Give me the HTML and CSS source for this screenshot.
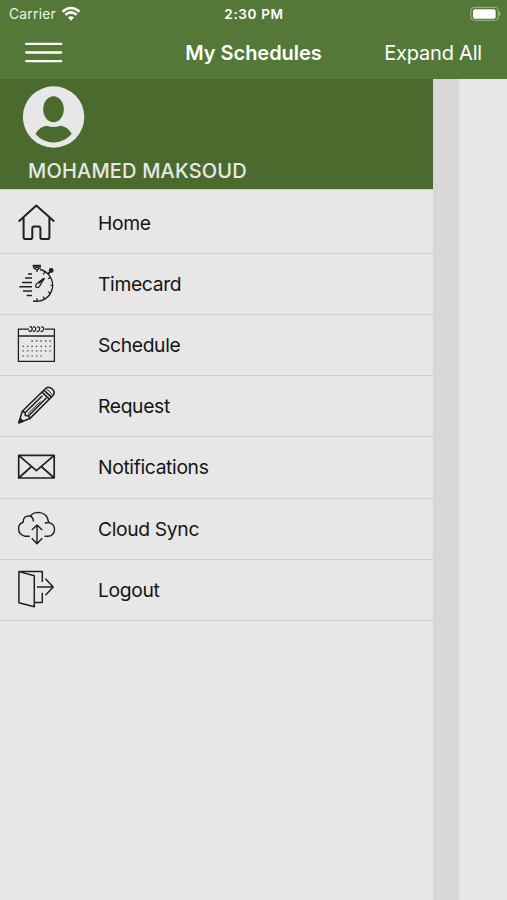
FILE: index.html
```html
<!DOCTYPE html>
<html lang="en">
<head>
<meta charset="utf-8">
<title>My Schedules</title>
<link rel="stylesheet" href="styles.css">
</head>
<body>
<header class="top">
  <div class="status">
    <div class="carrier"><span>Carrier</span>
      <svg width="20" height="16" viewBox="61 5 20 16" fill="none" stroke="#fff" stroke-width="2.5"><path d="M62.5 10.7Q71 3.4 79.5 10.7M65.4 13.8Q71 9 76.6 13.8"/><path d="M68 16.6Q71 14 74 16.6L71 19.7Z" fill="#fff" stroke="none"/></svg>
    </div>
    <span class="time">2:30 PM</span>
    <svg class="battery" width="32" height="16" viewBox="470 5 32 16"><rect x="470.8" y="6.3" width="27.6" height="13" rx="3.6" fill="none" stroke="#a5bb91" stroke-width="1"/><rect x="473" y="8.3" width="22.6" height="9.4" rx="1.8" fill="#fff"/><path d="M499.3 10.6Q502 12.8 499.3 15Z" fill="#a5bb91"/></svg>
  </div>
  <div class="bar">
    <svg width="38" height="22" viewBox="0 0 38 22" stroke="#fff" stroke-width="2.3" stroke-linecap="round"><path d="M1.2 1.9H36.2M1.2 10.5H36.2M1.2 19.2H36.2"/></svg>
    <h1>My Schedules</h1>
    <span class="expand">Expand All</span>
  </div>
</header>
<main>
  <nav class="drawer">
    <div class="profile">
      <svg width="62" height="62" viewBox="0 0 62 62"><circle cx="30.6" cy="31" r="30.7" fill="#e7e7e7"/><ellipse cx="30.5" cy="23.3" rx="10.3" ry="13" fill="#4b6b2e"/><path d="M23.7 39.7Q30.5 42.5 37.5 39.7Q44.5 40 48.7 48Q41 56.5 30.6 56.5Q20 56.5 12.5 48Q17 40 23.7 39.7Z" fill="#4b6b2e"/></svg>
      <div class="name">MOHAMED MAKSOUD</div>
    </div>
    <ul>
      <li><svg viewBox="0 193 60 60" stroke-width="2"><path d="M18.7 221.5 36.3 205.6 54.3 221.5M23.6 218V237.2Q23.6 239 25.4 239H30.5Q32.3 239 32.3 237.2V228.4Q32.3 226.5 34.2 226.5H38.5Q40.4 226.5 40.4 228.4V237.2Q40.4 239 42.2 239H47.6Q49.4 239 49.4 237.2V218"/></svg><span>Home</span></li>
      <li><svg viewBox="0 254 60 60" stroke-width="1.3"><path d="M40 269.5A16 16 0 0 1 33 301M37 269V272M45 271.8 43.3 274.5M50.3 277.5 48 278.8M53.3 285.3H50.5M50.3 293.2 48 291.8M44.6 299 43.2 296.5M37 301.2V298.2"/><path d="M33.2 265.5H40.4L40 268 37 270 33.8 268ZM34.2 266 39.5 268.5M39.6 266 34.4 268.5"/><path d="M48 274.2 50 271.8" stroke-width="2"/><circle cx="51.2" cy="270.4" r="1.8" fill="#252525"/><path d="M44.2 278.5 36.4 284Q34.6 286.8 37 287.5Q38.7 287.8 39.7 286Z"/><path d="M44 278.7 38.5 283" stroke-width="2.1"/><path d="M28 274H32M25 278.1H32M22 282.4H32M19.3 286.7H32M23 291H32M26.6 295.4H32" stroke-width="1.5"/></svg><span>Timecard</span></li>
      <li><svg viewBox="0 315 60 60" stroke-width="1.3"><path d="M29 329.2H18.4V361.4H54.4V329.2H45M18.4 336H54.4"/><path d="M28.5 330.5Q30.8 332.8 32.2 329.5Q32.2 326.5 29.6 326.8M33 330.8Q34 332.7 35.6 329.8Q36.2 326.5 33 326.8M36.8 330.8Q38 332.7 39.6 329.8Q40.2 326.5 37 326.8M40.8 330.8Q42 332.7 43.6 329.8Q44.2 326.5 41 326.8"/><path d="M31.4 341H51.5M22.4 346.3H51.5M22.4 350.8H51.5M22.4 355.8H42.5" stroke="#555" stroke-width="1.3" stroke-dasharray="1.5 3"/></svg><span>Schedule</span></li>
      <li><svg viewBox="0 376 60 60" stroke-width="1.6"><path d="M18.8 422.7 22.3 411.2 45.6 388.5Q48.6 385.8 52.3 389Q55.7 392.3 53 395.5L30.1 418.4ZM22.3 411.2 25 412.5 25.4 415.5 28.6 416 30.1 418.4M42 392.2 49.3 399.2M44 390.2 51.3 397.2M25.6 412.2 42.4 395.8M28.6 415.7 46.3 398"/><path d="M27.7 414 40.6 401.3" stroke-width="1"/><path d="M19 422.7 20.3 418.6 23 421.3Z" fill="#252525"/><path d="M46.5 389.2Q50 391 52.2 395" stroke-width="1"/></svg><span>Request</span></li>
      <li><svg viewBox="0 436.7 60 60" stroke-width="1.7"><path d="M18.7 455H54.2V477.7H18.7ZM18.7 455 36.4 470.4 54.2 455M18.7 477.7 31.5 466.2M54.2 477.7 41.3 466.2"/></svg><span>Notifications</span></li>
      <li><svg viewBox="0 498 60 60" stroke-width="1.4"><path d="M29.8 535.2H25.2Q18.6 534.2 18.6 527.6Q18.6 522.4 23.2 521.2Q23.2 514.6 29.5 515Q33 515.5 33.5 520.5M30.4 515.2Q33 511.4 38.7 511.4Q47.2 512 48.6 521.2M44.8 522.4Q47.7 520.8 50.6 522.2Q54.8 524.2 54.5 528.8Q53.8 535.2 47.7 535.2H44.5M37 524V542.5M31.8 529 37 524 42.2 529M31.8 537.2 37 542.8 42.2 537.2"/></svg><span>Cloud Sync</span></li>
      <li><svg viewBox="0 559 60 60" stroke-width="1.5"><path d="M42.3 581V570.6H18.9V601.8L34.3 605.8V574.8L18.9 570.6M34.3 601.5H42.3V591.8M37 586H53M45.4 577.8 53.2 586 45.4 594.2"/></svg><span>Logout</span></li>
    </ul>
  </nav>
  <div class="shade"></div>
  <div class="page"></div>
</main>
</body>
</html>
```
FILE: styles.css
```css
* { box-sizing: border-box; }
body {
  margin: 0;
  height: 900px;
  display: flex;
  flex-direction: column;
  overflow: hidden;
  font-family: Inter, "Liberation Sans", sans-serif;
  background: #e7e7e7;
  color: #151515;
}
svg { display: block; flex: none; }
.top { height: 79px; background: #547837; color: #fff; flex: none; }
.status {
  height: 27px;
  padding: 0 5px 0 9px;
  display: grid;
  grid-template-columns: 1fr auto 1fr;
  align-items: center;
  font-size: 13.8px;
}
.carrier { display: flex; align-items: center; gap: 5px; letter-spacing: .25px; color: #eef3e9; }
.carrier span { width: 47px; }
.time { font-weight: 600; font-size: 13.5px; letter-spacing: .65px; margin-right: 3px; }
.battery { justify-self: end; }
.bar {
  height: 51px;
  padding: 0 25px;
  display: grid;
  grid-template-columns: 1fr auto 1fr;
  align-items: center;
}
h1 { margin: 0; font-size: 20px; font-weight: 600; letter-spacing: -.04px; white-space: nowrap; }
.expand { justify-self: end; font-size: 20px; letter-spacing: -.2px; white-space: nowrap; }
main { flex: 1; display: flex; }
.drawer { width: 433px; flex: none; }
.profile {
  height: 110px;
  padding: 7px 0 0 23px;
  background: #4b6b2e;
  color: #e7e7e7;
}
.name { margin: 11px 0 0 5px; font-size: 20px; line-height: 24px; font-weight: 500; letter-spacing: .18px; white-space: nowrap; }
ul { margin: 0; padding: 2.9px 0 0; list-style: none; border-top: 1px solid #d2d6ce; }
li {
  height: 61.13px;
  display: flex;
  align-items: center;
  gap: 38px;
  border-bottom: 1px solid #cecece;
  font-size: 19.3px;
  letter-spacing: -.35px;
}
li svg { width: 60px; height: 60px; fill: none; stroke: #202020; stroke-linejoin: round; }
.shade { width: 26px; background: #d7d7d7; }
.page { flex: 1; }
```
